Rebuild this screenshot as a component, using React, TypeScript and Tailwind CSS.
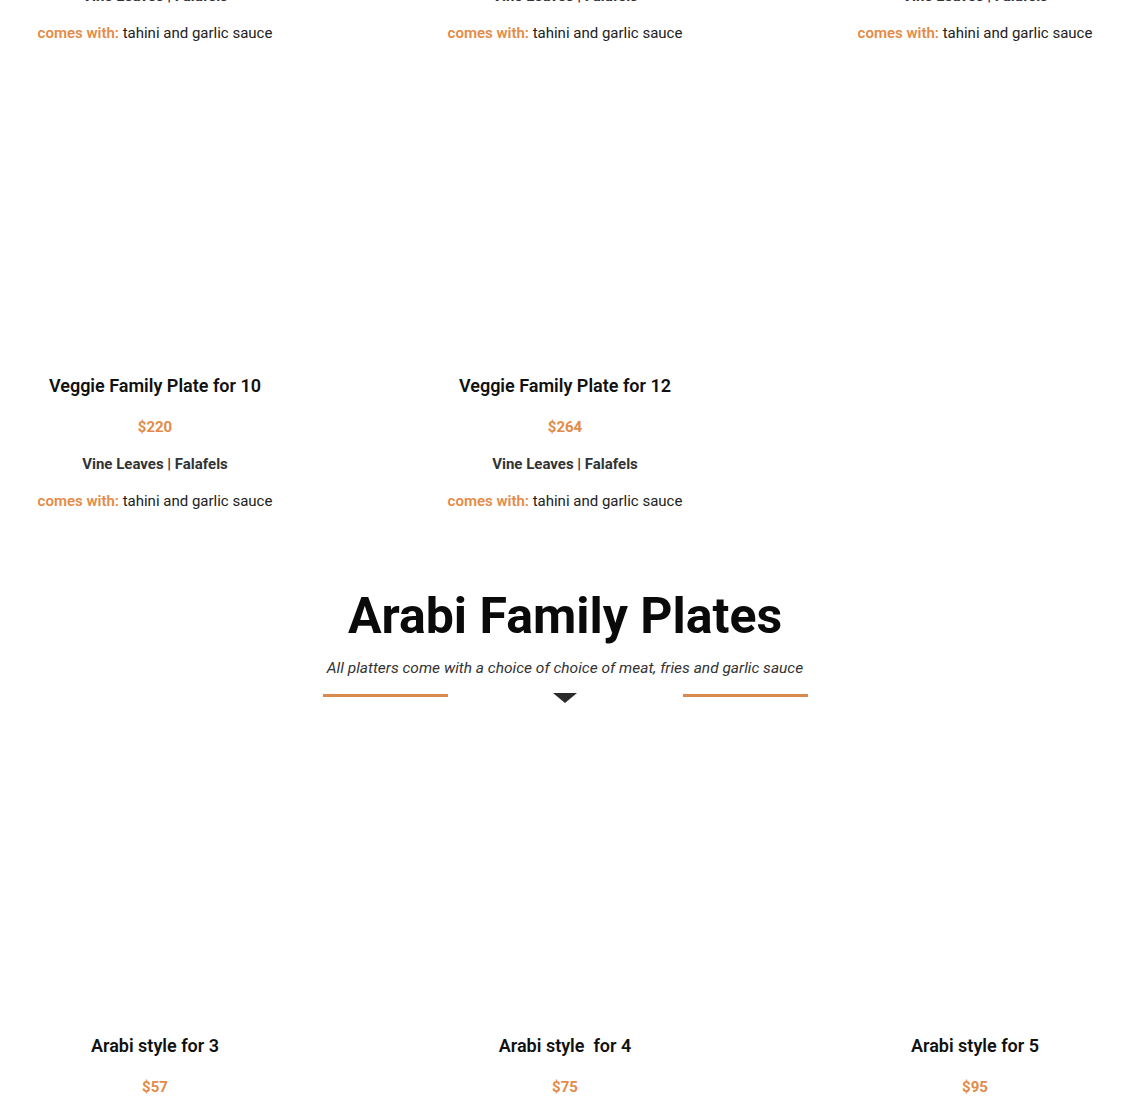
import React from "react";

type Item = { title: string; price: string; vine?: boolean };

const ORANGE = "text-[#e38b48]";

function Card({ item }: { item: Item }) {
  return (
    <div className="flex flex-col items-center text-center">
      <div className="h-[291px] w-full" />
      <h3 className="mt-[20px] text-[18px] leading-[24px] font-semibold text-[#111111] whitespace-pre">
        {item.title}
      </h3>
      <div className={`mt-[19px] text-[15px] leading-[20px] font-bold ${ORANGE}`}>{item.price}</div>
      {item.vine !== false && (
        <>
          <div className="mt-[17px] text-[15px] leading-[20px] font-bold text-[#333333]">
            Vine Leaves | Falafels
          </div>
          <div className="mt-[17px] text-[15px] leading-[20px] text-[#222222]">
            <span className={`font-semibold ${ORANGE}`}>comes with:</span> tahini and garlic sauce
          </div>
        </>
      )}
    </div>
  );
}

export default function App() {
  const veggie1: Item[] = [
    { title: "Veggie Family Plate for 4", price: "$88" },
    { title: "Veggie Family Plate for 6", price: "$132" },
    { title: "Veggie Family Plate for 8", price: "$176" },
  ];
  const veggie2: Item[] = [
    { title: "Veggie Family Plate for 10", price: "$220" },
    { title: "Veggie Family Plate for 12", price: "$264" },
  ];
  const arabi: Item[] = [
    { title: "Arabi style for 3", price: "$57", vine: false },
    { title: "Arabi style  for 4", price: "$75", vine: false },
    { title: "Arabi style for 5", price: "$95", vine: false },
  ];
  return (
    <div
      className="w-[1130px] h-[1112px] overflow-hidden bg-white"
      style={{ fontFamily: "Roboto, 'Noto Sans', sans-serif" }}
    >
      <div className="mt-[-405px]">
        <div className="grid grid-cols-3 gap-x-[100px] gap-y-[20px]">
          {veggie1.map((it, i) => (
            <Card key={"a" + i} item={it} />
          ))}
          {veggie2.map((it, i) => (
            <Card key={"b" + i} item={it} />
          ))}
        </div>

        <div className="mt-[75px] flex flex-col items-center">
          <h2 className="text-[50px] leading-[60px] font-bold text-[#0a0a0a]">Arabi Family Plates</h2>
          <p className="mt-[12px] text-[15.5px] leading-[20px] italic text-[#333333]">
            All platters come with a choice of choice of meat, fries and garlic sauce
          </p>
          <div className="mt-[15px] flex items-start h-[10px]">
            <div className="mt-[1px] w-[125px] h-[3px] bg-[#d98a4f]" />
            <svg className="ml-[105px] mr-[106px]" width="24" height="10" viewBox="0 0 24 10">
              <polygon points="0,0 24,0 12,10" fill="#2b2b2b" />
            </svg>
            <div className="mt-[1px] w-[125px] h-[3px] bg-[#d98a4f]" />
          </div>
        </div>

        <div className="mt-[20px] grid grid-cols-3 gap-x-[100px]">
          {arabi.map((it, i) => (
            <Card key={"c" + i} item={it} />
          ))}
        </div>
      </div>
    </div>
  );
}
